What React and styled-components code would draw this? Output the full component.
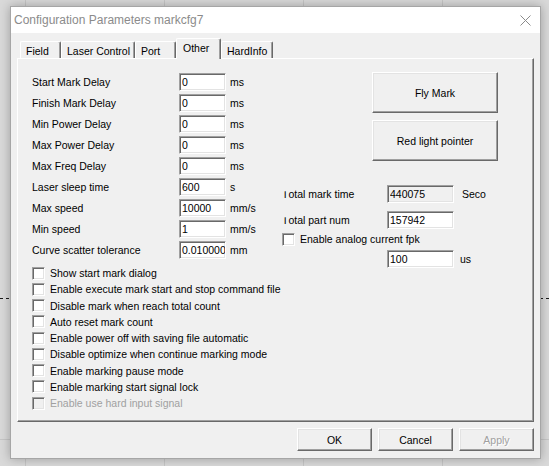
import React from "react"
import styled, { createGlobalStyle } from "styled-components"

const GlobalStyle = createGlobalStyle`
  html, body {
    margin: 0;
    padding: 0;
  }
  body {
    width: 549px;
    height: 466px;
    overflow: hidden;
    font-family: "Liberation Sans", Arial, sans-serif;
    font-size: 10.5px;
    color: #000;
    background-color: #d9d9d9;
    background-image:
      repeating-linear-gradient(to right, #1a1a1a 0 3px, transparent 3px 6px),
      linear-gradient(to bottom, transparent 439px, #c6c6c6 439px 440px, transparent 440px),
      repeating-linear-gradient(to right, transparent 0 25px, #c6c6c6 25px 26px, transparent 26px 139px);
    background-size: 100% 1px, 100% 100%, 100% 100%;
    background-position: 0 298px, 0 0, 0 0;
    background-repeat: no-repeat;
  }
`

const Page = styled.div`
  padding: 6px 0 0 10px;
`

const Dialog = styled.div`
  width: 531px;
  height: 453px;
  box-sizing: border-box;
  border: 1px solid #a6a6a6;
  background: #f0f0f0;
  box-shadow: 0 0 10px rgba(0, 0, 0, 0.28);
  display: flex;
  flex-direction: column;
`

const TitleBar = styled.div`
  height: 26px;
  background: #fff;
  display: flex;
  align-items: center;
  justify-content: space-between;
  padding: 0 9px 0 3px;
`

const Title = styled.span`
  font-size: 12px;
  color: #8b8b8b;
`

const Body = styled.div`
  width: 529px;
  box-sizing: border-box;
  padding: 5px 6px 0 6px;
`

const TabStrip = styled.div`
  display: flex;
  align-items: flex-end;
  height: 20px;
  padding-left: 3px;
`

const Tab = styled.div`
  position: relative;
  z-index: ${p => (p.$active ? 1 : 0)};
  width: ${p => p.$w}px;
  height: ${p => (p.$active ? 21 : 17)}px;
  margin-bottom: ${p => (p.$active ? -1 : 0)}px;
  box-sizing: border-box;
  display: flex;
  align-items: center;
  padding: ${p => (p.$active ? "0 0 2px 6px" : "1px 0 0 5px")};
  background: #f0f0f0;
  border-top: 1px solid #fff;
  border-left: 1px solid #fff;
  border-right: 1px solid #696969;
  box-shadow: inset -1px 0 0 #a0a0a0;
  border-radius: 2px 2px 0 0;
`

const Panel = styled.div`
  width: 517px;
  height: 364px;
  box-sizing: border-box;
  border-top: 1px solid #fff;
  border-left: 1px solid #fff;
  border-right: 1px solid #696969;
  border-bottom: 1px solid #696969;
  box-shadow: inset -1px -1px 0 #a0a0a0;
  padding: 12px 0 0 14px;
  display: flex;
`

const LeftCol = styled.div`
  width: 250px;
  flex-shrink: 0;
`

const FormRow = styled.div`
  display: flex;
  align-items: center;
  height: 21px;
`

const Label = styled.span`
  width: ${p => p.$w}px;
  flex-shrink: 0;
  white-space: nowrap;
`

const Field = styled.input`
  width: ${p => p.$w}px;
  height: 18px;
  box-sizing: border-box;
  margin: 0;
  padding: 0 0 0 2px;
  font-family: inherit;
  font-size: 10.5px;
  color: #000;
  background: ${p => (p.$readonly ? "#f0f0f0" : "#fff")};
  border-top: 1px solid #a0a0a0;
  border-left: 1px solid #a0a0a0;
  border-right: 1px solid #fff;
  border-bottom: 1px solid #fff;
  box-shadow: inset 1px 1px 0 #696969, inset -1px -1px 0 #e3e3e3;
  outline: none;
`

const Unit = styled.span`
  margin-left: ${p => p.$gap}px;
`

const CheckList = styled.div`
  margin-top: 5px;
`

const CheckRow = styled.label`
  display: flex;
  align-items: center;
  height: ${p => p.$h}px;
  white-space: nowrap;
  color: ${p => (p.$disabled ? "#a0a0a0" : "#000")};
`

const Box = styled.span`
  width: 13px;
  height: 13px;
  box-sizing: border-box;
  flex-shrink: 0;
  margin-right: 5px;
  background: ${p => (p.$disabled ? "#f0f0f0" : "#fff")};
  border-top: 1px solid #a0a0a0;
  border-left: 1px solid #a0a0a0;
  border-right: 1px solid #fff;
  border-bottom: 1px solid #fff;
  box-shadow: inset 1px 1px 0 #696969, inset -1px -1px 0 #e3e3e3;
`

const RightCol = styled.div`
  padding-top: 1px;
  display: flex;
  flex-direction: column;
`

const BigButton = styled.div`
  width: 126px;
  height: 41px;
  margin: 0 0 7px 90px;
  box-sizing: border-box;
  display: flex;
  align-items: center;
  justify-content: center;
  background: #f0f0f0;
  border-top: 1px solid #fff;
  border-left: 1px solid #fff;
  border-right: 1px solid #696969;
  border-bottom: 1px solid #696969;
  box-shadow: inset -1px -1px 0 #a0a0a0, inset 1px 1px 0 #e3e3e3;
`

const StatRow = styled.div`
  display: flex;
  align-items: center;
  height: ${p => p.$h}px;
  margin-top: ${p => p.$mt || 0}px;
`

const Clip = styled.span`
  display: inline-block;
  clip-path: inset(32% 0 0 0);
`

const Footer = styled.div`
  display: flex;
  justify-content: flex-end;
  gap: 6px;
  padding-top: 6px;
`

const Button = styled.div`
  width: 75px;
  height: 23px;
  box-sizing: border-box;
  display: flex;
  align-items: center;
  justify-content: center;
  background: #f0f0f0;
  color: ${p => (p.$disabled ? "#a0a0a0" : "#000")};
  text-shadow: ${p => (p.$disabled ? "1px 1px 0 #fff" : "none")};
  border-top: 1px solid #fff;
  border-left: 1px solid #fff;
  border-right: 1px solid #696969;
  border-bottom: 1px solid #696969;
  box-shadow: inset -1px -1px 0 #a0a0a0, inset 1px 1px 0 #e3e3e3;
`

const tabs = [
  { name: "Field", w: 41 },
  { name: "Laser Control", w: 74 },
  { name: "Port", w: 41 },
  { name: "Other", w: 45, active: true },
  { name: "HardInfo", w: 52 },
]

const params = [
  ["Start Mark Delay", "0", "ms"],
  ["Finish Mark Delay", "0", "ms"],
  ["Min Power Delay", "0", "ms"],
  ["Max Power Delay", "0", "ms"],
  ["Max Freq Delay", "0", "ms"],
  ["Laser sleep time", "600", "s"],
  ["Max speed", "10000", "mm/s"],
  ["Min speed", "1", "mm/s"],
  ["Curve scatter tolerance", "0.010000", "mm"],
]

const options = [
  "Show start mark dialog",
  "Enable execute mark start and stop command file",
  "Disable mark when reach total count",
  "Auto reset mark count",
  "Enable power off with saving file automatic",
  "Disable optimize when continue marking mode",
  "Enable marking pause mode",
  "Enable marking start signal lock",
]

const CloseIcon = () => (
  <svg width="11" height="11" viewBox="0 0 11 11">
    <path d="M0.5 0.5 L10.5 10.5 M10.5 0.5 L0.5 10.5" stroke="#8b8b8b" strokeWidth="1" fill="none" />
  </svg>
)

const App = () => {
  return (
    <Page>
      <GlobalStyle />
      <Dialog>
        <TitleBar>
          <Title>Configuration Parameters markcfg7</Title>
          <CloseIcon />
        </TitleBar>
        <Body>
          <TabStrip>
            {tabs.map(t => (
              <Tab key={t.name} $w={t.w} $active={t.active}>
                {t.name}
              </Tab>
            ))}
          </TabStrip>
          <Panel>
            <LeftCol>
              {params.map(([label, value, unit]) => (
                <FormRow key={label}>
                  <Label $w={147}>{label}</Label>
                  <Field $w={47} readOnly defaultValue={value} />
                  <Unit $gap={4}>{unit}</Unit>
                </FormRow>
              ))}
              <CheckList>
                {options.map(o => (
                  <CheckRow key={o} $h={16.25}>
                    <Box />
                    {o}
                  </CheckRow>
                ))}
                <CheckRow $h={16.25} $disabled>
                  <Box $disabled />
                  Enable use hard input signal
                </CheckRow>
              </CheckList>
            </LeftCol>
            <RightCol>
              <BigButton>Fly Mark</BigButton>
              <BigButton>Red light pointer</BigButton>
              <StatRow $h={21} $mt={15}>
                <Label $w={105}>
                  <Clip>T</Clip>otal mark time
                </Label>
                <Field $w={67} $readonly readOnly defaultValue="440075" />
                <Unit $gap={8}>Seco</Unit>
              </StatRow>
              <StatRow $h={21} $mt={5}>
                <Label $w={105}>
                  <Clip>T</Clip>otal part num
                </Label>
                <Field $w={67} readOnly defaultValue="157942" />
              </StatRow>
              <StatRow $h={18}>
                <CheckRow $h={18}>
                  <Box />
                  Enable analog current fpk
                </CheckRow>
              </StatRow>
              <StatRow $h={21}>
                <Label $w={105} />
                <Field $w={67} readOnly defaultValue="100" />
                <Unit $gap={6}>us</Unit>
              </StatRow>
            </RightCol>
          </Panel>
          <Footer>
            <Button>OK</Button>
            <Button>Cancel</Button>
            <Button $disabled>Apply</Button>
          </Footer>
        </Body>
      </Dialog>
    </Page>
  )
}

export default App
